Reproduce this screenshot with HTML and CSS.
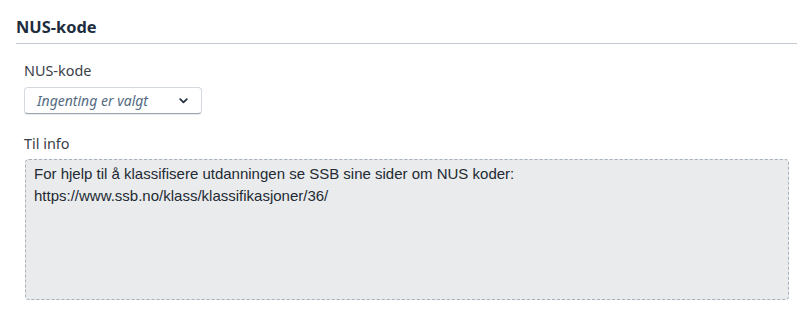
FILE: index.html
```html
<!DOCTYPE html>
<html lang="no">
<head>
<meta charset="utf-8">
<title>NUS-kode</title>
<link rel="stylesheet" href="styles.css">
</head>
<body>
<section class="panel">
  <h2 class="panel-title">NUS-kode</h2>
  <div class="fields">
    <div class="field">
      <label class="field-label">NUS-kode</label>
      <div class="select">
        <span class="select-placeholder">Ingenting er valgt</span>
        <svg class="chevron" width="9" height="6" viewBox="0 0 9 6" aria-hidden="true">
          <path d="M1.2 1.2 L4.5 4.3 L7.8 1.2" fill="none" stroke="#1d2d3e" stroke-width="1.7" stroke-linecap="round" stroke-linejoin="round"/>
        </svg>
      </div>
    </div>
    <div class="field field-info">
      <label class="field-label">Til info</label>
      <div class="info-box">
        <div>For hjelp til å klassifisere utdanningen se SSB sine sider om NUS koder:</div>
        <div>https://www.ssb.no/klass/klassifikasjoner/36/</div>
      </div>
    </div>
  </div>
</section>
</body>
</html>
```

FILE: styles.css
```css
html, body {
  margin: 0;
  padding: 0;
  background: #ffffff;
}

body {
  font-family: "Noto Sans", "Open Sans", sans-serif;
  color: #1d2d3e;
}

.panel {
  padding: 0 3px 0 16px;
}

.panel-title {
  margin: 0;
  padding: 17px 0 6px 0;
  font-size: 16.4px;
  line-height: 20px;
  font-weight: 700;
  color: #1d2d3e;
  border-bottom: 1px solid #c3cad1;
}

.fields {
  padding: 18px 0 0 8px;
  display: flex;
  flex-direction: column;
  gap: 21px;
}

.field {
  display: flex;
  flex-direction: column;
  align-items: flex-start;
}

.field-label {
  font-size: 14.4px;
  line-height: 18px;
  color: #3a4047;
  margin-bottom: 7px;
}

.field-info .field-label {
  margin-bottom: 6px;
}

.select {
  box-sizing: border-box;
  width: 178px;
  height: 27px;
  border: 1px solid #d3d9df;
  border-bottom-color: #9aa8b6;
  border-radius: 4px;
  background: #ffffff;
  display: flex;
  align-items: center;
  justify-content: space-between;
  padding: 0 13px 0 12px;
  box-shadow: 0 1px 0 rgba(85, 107, 130, 0.15);
}

.select-placeholder {
  font-size: 14px;
  font-style: italic;
  color: #556b82;
  line-height: 18px;
}

.chevron {
  display: block;
}

.info-box {
  box-sizing: border-box;
  width: 764px;
  height: 141px;
  margin-left: 1px;
  border: 1px dashed #a7b1bb;
  border-radius: 4px;
  background: #eaebed;
  padding: 3px 8px;
  font-family: "Liberation Sans", Arial, sans-serif;
  font-size: 15px;
  line-height: 22px;
  color: #222a33;
}
```
